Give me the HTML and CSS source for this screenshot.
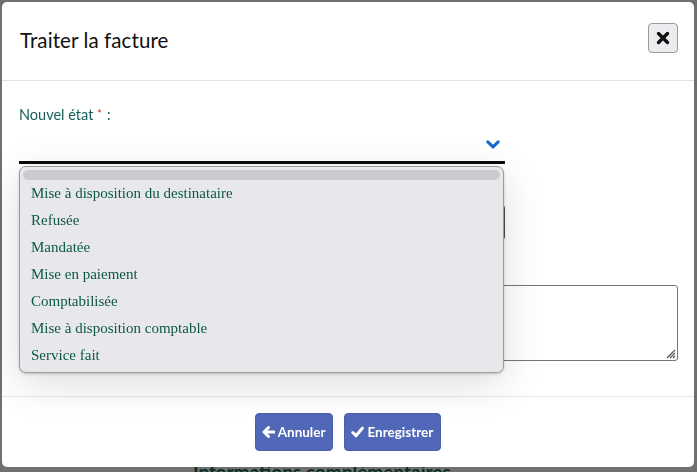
FILE: index.html
```html
<!DOCTYPE html>
<html lang="fr">
<head>
<meta charset="utf-8">
<title>Traiter la facture</title>
<link rel="stylesheet" href="styles.css">
</head>
<body>
<div class="page">
  <h2 class="page-title">Informations complémentaires</h2>
</div>

<div class="modal">
  <div class="modal-header">
    <h1 class="modal-title">Traiter la facture</h1>
    <button class="close-btn" aria-label="Fermer">
      <svg width="14" height="14" viewBox="0 0 14 14"><path d="M2.5 2.5 L11.5 11.5 M11.5 2.5 L2.5 11.5" stroke="#111" stroke-width="3.4" stroke-linecap="round"/></svg>
    </button>
  </div>

  <div class="modal-body">
    <label class="field-label">Nouvel état<span class="req">*</span>:</label>
    <div class="select-wrap">
      <div class="select-line">
        <svg class="chevron" width="14" height="9" viewBox="0 0 14 9"><path d="M1.8 1.8 L7 6.8 L12.2 1.8" fill="none" stroke="#1767d0" stroke-width="3" stroke-linecap="round" stroke-linejoin="round"/></svg>
      </div>
      <ul class="dropdown">
        <li class="opt-blank"></li>
        <li>Mise à disposition du destinataire</li>
        <li>Refusée</li>
        <li>Mandatée</li>
        <li>Mise en paiement</li>
        <li>Comptabilisée</li>
        <li>Mise à disposition comptable</li>
        <li>Service fait</li>
      </ul>
    </div>
    <div class="select-box"></div>
    <div class="textarea-box">
      <svg class="grip" width="11" height="11" viewBox="0 0 11 11"><path d="M10 2 L2 10 M10 5 L5 10 M10 8 L8 10" stroke="#555" stroke-width="1.2"/></svg>
    </div>
  </div>

  <div class="modal-footer">
    <button class="btn">
      <svg width="13" height="12" viewBox="0 0 13 12"><path d="M12 6 H3 M6.5 1.5 L2 6 L6.5 10.5" fill="none" stroke="#fff" stroke-width="3" stroke-linecap="round" stroke-linejoin="round"/></svg>
      Annuler
    </button>
    <button class="btn">
      <svg width="13" height="12" viewBox="0 0 13 12"><path d="M1.8 6.5 L5 9.8 L11.3 2.2" fill="none" stroke="#fff" stroke-width="3" stroke-linecap="round" stroke-linejoin="round"/></svg>
      Enregistrer
    </button>
  </div>
</div>
</body>
</html>
```

FILE: styles.css
```css
* { box-sizing: border-box; }

html, body {
  margin: 0;
  padding: 0;
  height: 100%;
}

body {
  background: #707070;
  font-family: Lato, "Noto Sans", sans-serif;
  overflow: hidden;
}

.page {
  padding: 460px 0 0 193px;
}

.page-title {
  margin: 0;
  font-family: Lato, sans-serif;
  font-weight: 700;
  font-size: 19px;
  color: #0b2f28;
  line-height: 24px;
}

.modal {
  position: fixed;
  left: 2px;
  top: 2px;
  width: 692px;
  height: 465px;
  background: #fff;
  border-radius: 5px;
  display: flex;
  flex-direction: column;
  z-index: 5;
}

.modal-header {
  height: 79px;
  border-bottom: 1px solid #e2e2e2;
  display: flex;
  align-items: center;
  justify-content: space-between;
  padding: 0 16px 2px 18px;
}

.modal-title {
  margin: 0;
  font-family: Lato, sans-serif;
  font-weight: 400;
  font-size: 20.5px;
  color: #111;
  letter-spacing: 0.1px;
}

.close-btn {
  width: 30px;
  height: 30px;
  padding: 0;
  border: 1px solid #9a9a9a;
  border-radius: 4px;
  background: #ebebf0;
  display: flex;
  align-items: center;
  justify-content: center;
  margin-top: -4px;
}

.modal-body {
  flex: 1;
  padding: 24px 17px 0 17px;
  display: flex;
  flex-direction: column;
  align-items: flex-start;
}

.field-label {
  font-family: Lato, sans-serif;
  font-size: 14.5px;
  line-height: 20px;
  color: #16605c;
}

.req {
  color: #d22a2a;
  font-size: 11px;
  vertical-align: top;
  margin-left: 4px;
  margin-right: 5px;
  position: relative;
  top: -1px;
}

.select-wrap {
  position: relative;
  width: 486px;
  margin-top: 3px;
}

.select-line {
  height: 36px;
  border-bottom: 3px solid #0a0a0a;
  display: flex;
  align-items: center;
  justify-content: flex-end;
  padding-right: 5px;
  padding-bottom: 1px;
}

.dropdown {
  position: absolute;
  left: 0;
  top: 38px;
  width: 485px;
  height: 207px;
  margin: 0;
  padding: 3px 3px 0 3px;
  list-style: none;
  background: #e8e7ec;
  border: 1px solid #9c9c9c;
  border-radius: 7px;
  box-shadow: 0 10px 40px rgba(0, 0, 0, 0.14), 0 1px 3px rgba(0, 0, 0, 0.2);
  z-index: 2;
}

.dropdown li {
  font-family: "Liberation Serif", "Times New Roman", serif;
  font-size: 15px;
  line-height: 27px;
  height: 27px;
  color: #0b5846;
  padding-left: 8px;
}

.dropdown li.opt-blank {
  height: 10px;
  background: #cbcbce;
  border-radius: 5px;
}

.select-box {
  width: 486px;
  height: 35px;
  margin-top: 41px;
  border: 1px solid #555;
  border-radius: 3px;
}

.textarea-box {
  position: relative;
  width: 659px;
  height: 76px;
  margin-top: 45px;
  border: 1px solid #767676;
  border-radius: 3px;
}

.grip {
  position: absolute;
  right: 1px;
  bottom: 1px;
}

.modal-footer {
  height: 71px;
  border-top: 1px solid #e6e6e6;
  display: flex;
  justify-content: center;
  align-items: flex-start;
  gap: 11px;
  padding-top: 16px;
}

.btn {
  height: 38px;
  padding: 0 7px 0 6px;
  border: 1px solid #4a60ad;
  border-radius: 4px;
  background: #5168b8;
  color: #fff;
  font-family: Lato, sans-serif;
  font-weight: 700;
  font-size: 13.5px;
  display: flex;
  align-items: center;
  gap: 3px;
}
```
